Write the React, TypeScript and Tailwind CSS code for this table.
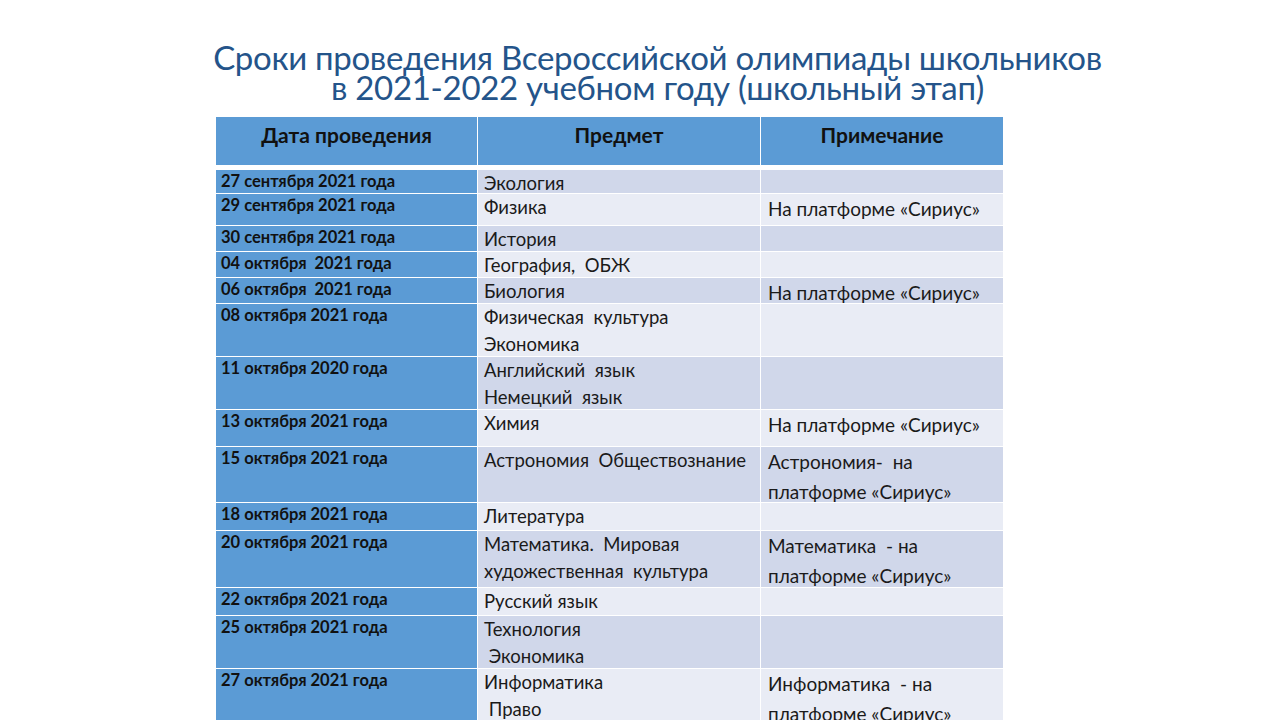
type Row = {
  date: string
  subject: string[]
  note: string[]
  h: string
}

const rows: Row[] = [
  { date: '27 сентября 2021 года', subject: ['Экология'], note: [], h: 'h-[23px]' },
  { date: '29 сентября 2021 года', subject: ['Физика'], note: ['На платформе «Сириус»'], h: 'h-[31px]' },
  { date: '30 сентября 2021 года', subject: ['История'], note: [], h: 'h-[25px]' },
  { date: '04 октября  2021 года', subject: ['География,  ОБЖ'], note: [], h: 'h-[25px]' },
  { date: '06 октября  2021 года', subject: ['Биология'], note: ['На платформе «Сириус»'], h: 'h-[25px]' },
  { date: '08 октября 2021 года', subject: ['Физическая  культура', 'Экономика'], note: [], h: 'h-[52px]' },
  { date: '11 октября 2020 года', subject: ['Английский  язык', 'Немецкий  язык'], note: [], h: 'h-[52px]' },
  { date: '13 октября 2021 года', subject: ['Химия'], note: ['На платформе «Сириус»'], h: 'h-[36px]' },
  { date: '15 октября 2021 года', subject: ['Астрономия  Обществознание'], note: ['Астрономия-  на', 'платформе «Сириус»'], h: 'h-[55px]' },
  { date: '18 октября 2021 года', subject: ['Литература'], note: [], h: 'h-[27px]' },
  { date: '20 октября 2021 года', subject: ['Математика.  Мировая', 'художественная  культура'], note: ['Математика  - на', 'платформе «Сириус»'], h: 'h-[56px]' },
  { date: '22 октября 2021 года', subject: ['Русский язык'], note: [], h: 'h-[27px]' },
  { date: '25 октября 2021 года', subject: ['Технология', ' Экономика'], note: [], h: 'h-[52px]' },
  { date: '27 октября 2021 года', subject: ['Информатика', ' Право'], note: ['Информатика  - на', 'платформе «Сириус»'], h: 'h-[60px]' },
]

export default function App() {
  return (
    <div className="h-[720px] w-[1280px] overflow-hidden bg-white font-['Lato','Open_Sans',sans-serif]">
      <h1 className="pl-[35px] pt-[42px] text-center text-[33px] leading-[30px] tracking-[-0.3px] text-[#24548a]">
        Сроки проведения Всероссийской олимпиады школьников
        <br />
        в 2021-2022 учебном году (школьный этап)
      </h1>

      <div className="ml-[216px] mt-[15px] w-[787px] bg-white">
        <div className="grid h-[48px] grid-cols-[261px_282px_242px] gap-x-px">
          {['Дата проведения', 'Предмет', 'Примечание'].map((t) => (
            <div key={t} className="bg-[#5b9bd5] pt-[5px] text-center text-[21px] font-bold leading-[26px] text-[#111]">
              {t}
            </div>
          ))}
        </div>

        <div className="mt-[5px] flex flex-col gap-y-px">
          {rows.map((r, i) => {
            const band = i % 2 === 0 ? 'bg-[#d0d7ea]' : 'bg-[#e9ecf5]'
            return (
              <div
                key={r.date + i}
                className={`grid grid-cols-[261px_282px_242px] grid-rows-[minmax(0,1fr)] gap-x-px ${r.h}`}
              >
                <div className="whitespace-pre bg-[#5b9bd5] pl-[5px] pt-[1px] text-[16.5px] font-bold leading-[20px] text-[#111]">
                  {r.date}
                </div>
                <div className={`${band} whitespace-pre pl-[6px] text-[18.5px] leading-[27px] text-[#1a1a1a]`}>
                  {r.subject.map((s) => (
                    <div key={s}>{s}</div>
                  ))}
                </div>
                <div className={`${band} whitespace-pre pl-[7px] text-[19px] leading-[30px] text-[#1a1a1a]`}>
                  {r.note.map((s) => (
                    <div key={s}>{s}</div>
                  ))}
                </div>
              </div>
            )
          })}
        </div>
      </div>
    </div>
  )
}
